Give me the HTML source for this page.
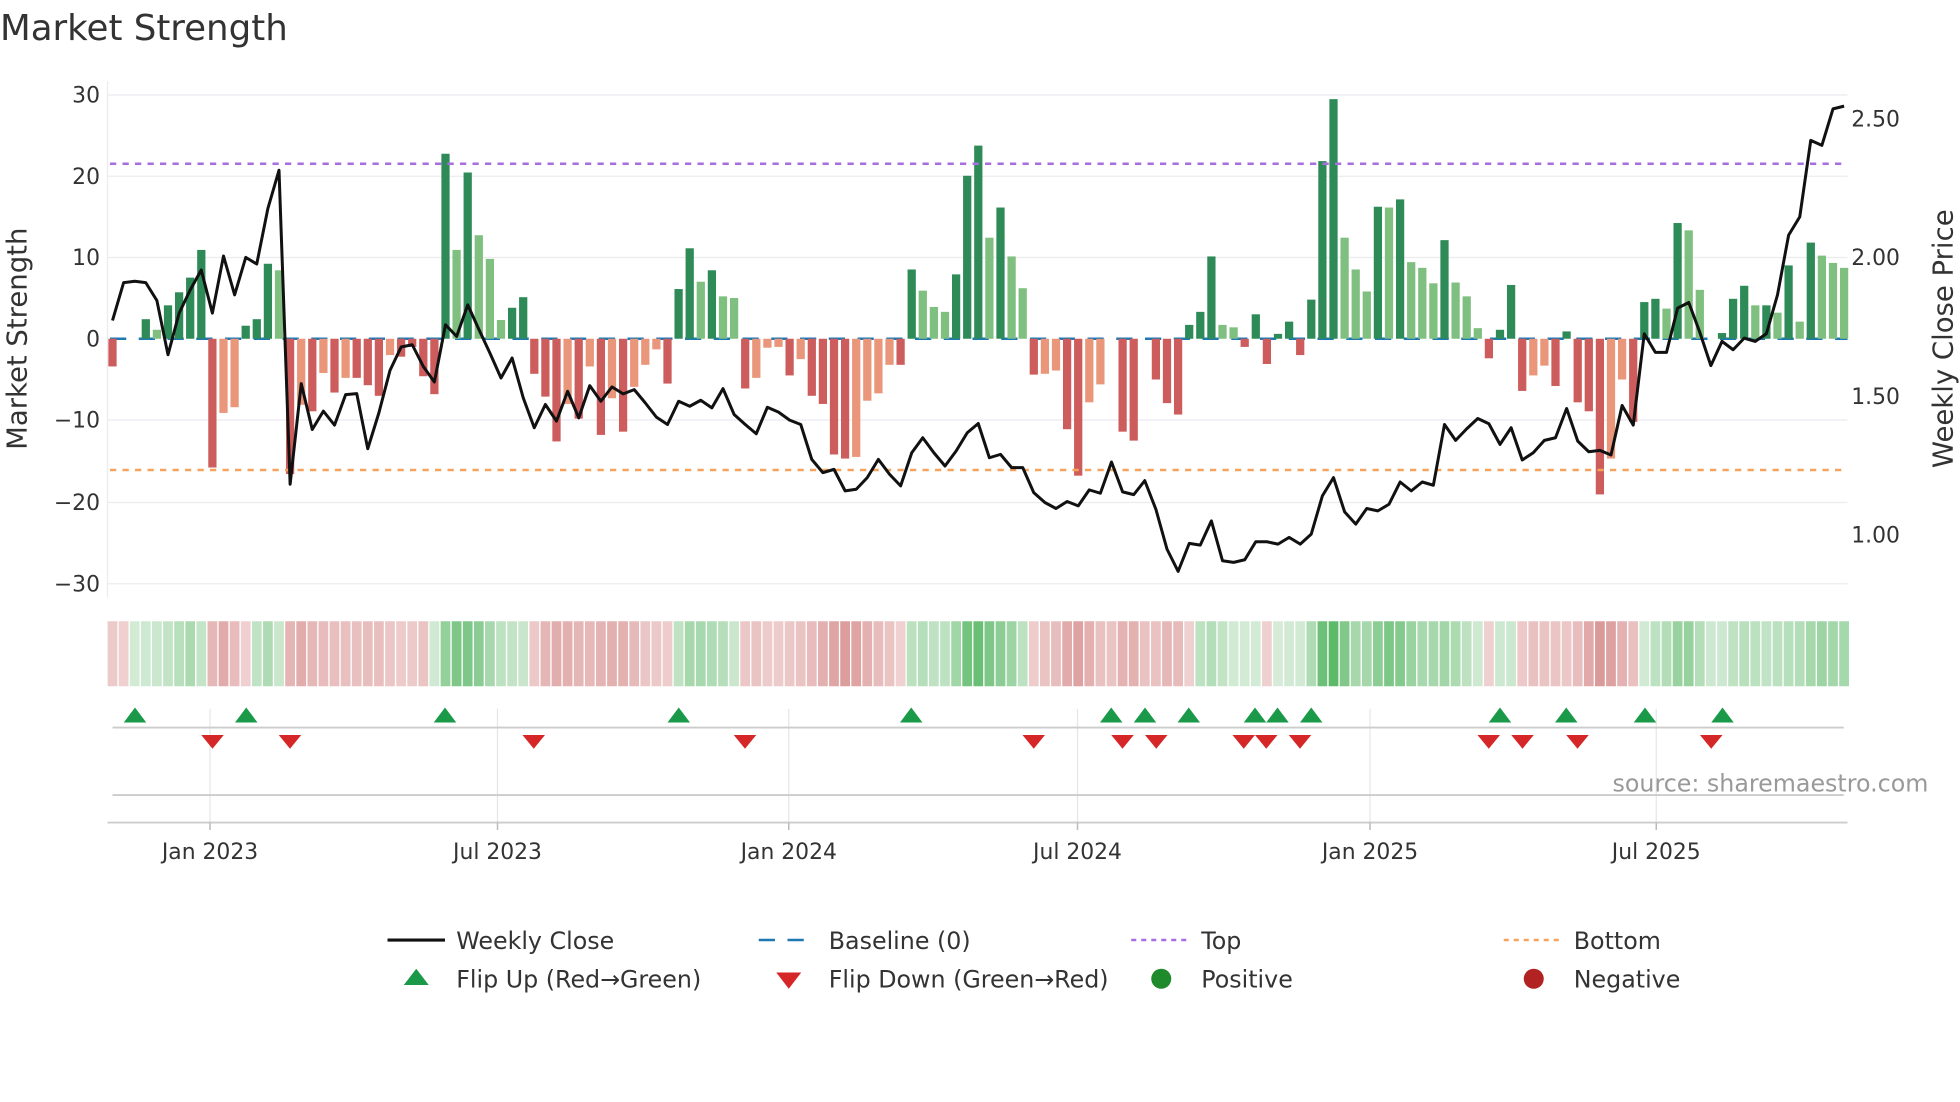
<!DOCTYPE html>
<html><head><meta charset="utf-8"><style>
html,body{margin:0;padding:0;background:#fff;width:1960px;height:1102px;overflow:hidden}
svg{display:block}
text{font-family:"DejaVu Sans","Liberation Sans",sans-serif;fill:#333}
</style></head><body>
<svg id="s" width="1960" height="1102" viewBox="0 0 1568 881.6" xmlns="http://www.w3.org/2000/svg">
<text x="0" y="32" font-size="28.5">Market Strength</text>
<g stroke="#ebebf0" stroke-width="1">
<line x1="86" x2="1478" y1="76" y2="76"/><line x1="86" x2="1478" y1="141" y2="141"/><line x1="86" x2="1478" y1="206" y2="206"/><line x1="86" x2="1478" y1="336" y2="336"/><line x1="86" x2="1478" y1="402" y2="402"/><line x1="86" x2="1478" y1="467" y2="467"/>
<line x1="86" x2="86" y1="65" y2="478"/>
</g>
<g font-size="17.5" text-anchor="end">
<text x="80" y="82">30</text><text x="80" y="147">20</text><text x="80" y="212">10</text><text x="80" y="277">0</text><text x="80" y="342">−10</text><text x="80" y="408">−20</text><text x="80" y="473">−30</text>
</g>
<g font-size="17.5">
<text x="1481" y="101">2.50</text><text x="1481" y="212">2.00</text><text x="1481" y="323">1.50</text><text x="1481" y="434">1.00</text>
</g>
<text font-size="22" transform="translate(21,271) rotate(-90)" text-anchor="middle">Market Strength</text>
<text font-size="22" transform="translate(1562,271) rotate(-90)" text-anchor="middle">Weekly Close Price</text>
<line x1="88" x2="1478" y1="271" y2="271" stroke="#1f77b4" stroke-width="2" stroke-dasharray="13,10"/>
<g id="bars"></g>
<line x1="88" x2="1478" y1="131" y2="131" stroke="#a66ee0" stroke-width="2" stroke-dasharray="5,5"/>
<line x1="88" x2="1478" y1="376" y2="376" stroke="#f4a25c" stroke-width="2" stroke-dasharray="5,5"/>
<polyline id="pl" fill="none" stroke="#111" stroke-width="2.4" stroke-linejoin="round"/>
<g id="strip"></g>
<g stroke="#e6e6ea" stroke-width="1">
<line x1="168" x2="168" y1="567" y2="658"/><line x1="398" x2="398" y1="567" y2="658"/><line x1="631" x2="631" y1="567" y2="658"/><line x1="862" x2="862" y1="567" y2="658"/><line x1="1096" x2="1096" y1="567" y2="658"/><line x1="1325" x2="1325" y1="567" y2="658"/>
</g>
<line x1="90" x2="1475" y1="582" y2="582" stroke="#ccc" stroke-width="1.5"/>
<line x1="90" x2="1475" y1="636" y2="636" stroke="#ccc" stroke-width="1.5"/>
<line x1="86" x2="1478" y1="658" y2="658" stroke="#ccc" stroke-width="1.5"/>
<g stroke="#bbb" stroke-width="1.2"><line x1="168" x2="168" y1="658" y2="664"/><line x1="398" x2="398" y1="658" y2="664"/><line x1="631" x2="631" y1="658" y2="664"/><line x1="862" x2="862" y1="658" y2="664"/><line x1="1096" x2="1096" y1="658" y2="664"/><line x1="1325" x2="1325" y1="658" y2="664"/></g>
<g id="mk"></g>
<text x="1290" y="633" font-size="19" style="fill:#999">source: sharemaestro.com</text>
<g font-size="17.5" text-anchor="middle">
<text x="168" y="687">Jan 2023</text><text x="398" y="687">Jul 2023</text><text x="631" y="687">Jan 2024</text><text x="862" y="687">Jul 2024</text><text x="1096" y="687">Jan 2025</text><text x="1325" y="687">Jul 2025</text>
</g>
<g font-size="19">
<line x1="310" x2="356" y1="752" y2="752" stroke="#111" stroke-width="2.5"/><text x="365" y="759">Weekly Close</text>
<line x1="607" x2="652" y1="752" y2="752" stroke="#1f77b4" stroke-width="2" stroke-dasharray="13,10"/><text x="663" y="759">Baseline (0)</text>
<line x1="905" x2="950" y1="752" y2="752" stroke="#a66ee0" stroke-width="2" stroke-dasharray="4,4"/><text x="961" y="759">Top</text>
<line x1="1203" x2="1248" y1="752" y2="752" stroke="#f4a25c" stroke-width="2" stroke-dasharray="4,4"/><text x="1259" y="759">Bottom</text>
<polygon points="323,788 343,788 333,775" fill="#1a9a48"/><text x="365" y="790">Flip Up (Red→Green)</text>
<polygon points="621,778 641,778 631,791" fill="#d62728"/><text x="663" y="790">Flip Down (Green→Red)</text>
<circle cx="929" cy="783" r="8" fill="#1f8a2b"/><text x="961" y="790">Positive</text>
<circle cx="1227" cy="783" r="8" fill="#b22222"/><text x="1259" y="790">Negative</text>
</g>
</svg>
<script>
var B="-3.4d 0n 0n 2.4d 1.1l 4.1d 5.7d 7.5d 10.9d -15.8d -9.1l -8.4l 1.6d 2.4d 9.2d 8.4l -16.6d -8.1l -8.9d -4.2l -6.6d -4.8l -4.8d -5.7d -7d -2l -2.2d -1d -4.6d -6.8d 22.7d 10.9l 20.4d 12.7l 9.8l 2.3l 3.8d 5.1d -4.3d -7.1d -12.6d -8l -9.8d -3.4l -11.8d -7.3l -11.4d -5.9l -3.2l -1.3l -5.5d 6.1d 11.1d 7l 8.4d 5.2l 5l -6.1d -4.8l -1.1l -1l -4.5d -2.5l -7d -8d -14.2d -14.7d -14.5l -7.6l -6.7l -3.2l -3.2d 8.5d 5.9l 3.9l 3.3l 7.9d 20d 23.7d 12.4l 16.1d 10.1l 6.2l -4.4d -4.3l -3.9l -11.1d -16.8d -7.8l -5.6l 0n -11.4d -12.5d 0n -5d -7.9d -9.3d 1.7d 3.3d 10.1d 1.7l 1.4l -1d 3d -3.1d 0.6d 2.1d -2d 4.8d 21.8d 29.4d 12.4l 8.5l 5.8l 16.2d 16.1l 17.1d 9.4l 8.7l 6.8l 12.1d 6.9l 5.2l 1.3l -2.4d 1.1d 6.6d -6.4d -4.5l -3.3l -5.8d 0.9d -7.8d -8.9d -19.1d -14.7l -5l -10.2d 4.5d 4.9d 3.7l 14.2d 13.3l 6l 0n 0.7d 4.9d 6.5d 4.1l 4.1d 3.2l 9d 2.1l 11.8d 10.2l 9.3l 8.7l".split(" ");
var L=[722,608,604,608,662,825,700,630,570,700,528,645,532,552,385,270,1215,912,1050,995,1037,945,942,1108,1000,872,802,795,860,907,735,770,675,748,820,895,835,955,1045,975,1025,935,1015,918,965,922,943,930,970,1013,1035,965,980,
962,985,927,1005,1035,1063,983,998,1022,1035,1140,1180,1170,1235,1230,1195,1140,1185,1220,1120,1075,1120,1160,1115,1060,1032,1135,1125,1165,1165,1240,1270,1288,1267,1280,1232,1242,1148,1238,1246,1204,1290,1410,1477,1393,1398,1325,1445,1450,1442,1388,1388,1395,1375,
1395,1365,1250,1195,1298,1335,1288,1295,1275,1208,1235,1208,1218,1035,1083,1048,1017,1033,1095,1045,1142,1120,1083,1075,987,1085,1117,1113,1127,978,1037,762,818,818,685,668,757,858,785,810,775,785,762,645,465,410,180,195,85,77];
var ns="http://www.w3.org/2000/svg",bars=document.getElementById("bars"),strip=document.getElementById("strip");
function el(t,a,p){var e=document.createElementNS(ns,t);for(var k in a)e.setAttribute(k,a[k]);p.appendChild(e);return e;}
var pts=[];
for(var i=0;i<B.length;i++){
 var v=parseFloat(B[i]),c=B[i].slice(-1),x=90+i*8.88;
 var col=v>=0?(c=="d"?"#2e8b57":"#7fbf7f"):(c=="d"?"#cd5c5c":"#e9967a");
 if(c!="n"){var h=Math.abs(v)*6.52;el("rect",{x:x-3.3,y:v>=0?271-h:271,width:6.6,height:h,fill:col},bars);}
 var s=0,n=0;for(var j=-1;j<=1;j++){var q=B[i+j];if(q){s+=parseFloat(q)*(j==0?2:1);n+=(j==0?2:1);}}s/=n;
 var a=Math.min(1,Math.abs(s)/22);
 var sc=s>=0?"rgb("+Math.round(214-120*a)+","+Math.round(236-50*a)+","+Math.round(216-110*a)+")":"rgb("+Math.round(240-30*a)+","+Math.round(210-80*a)+","+Math.round(210-80*a)+")";
 el("rect",{x:x-3.9,y:497,width:7.8,height:52,fill:sc},strip);
 pts.push(x.toFixed(1)+","+(271+(L[i]-777)*0.2658).toFixed(1));
}
document.getElementById("pl").setAttribute("points",pts.join(" "));
var mk=document.getElementById("mk");
[108,197,356,543,729,889,916,951,1004,1022,1049,1200,1253,1316,1378].forEach(function(x){el("polygon",{points:(x-9)+",578 "+(x+9)+",578 "+x+",566",fill:"#1a9a48"},mk);});
[170,232,427,596,827,898,925,995,1013,1040,1191,1218,1262,1369].forEach(function(x){el("polygon",{points:(x-9)+",588 "+(x+9)+",588 "+x+",599",fill:"#d62728"},mk);});
</script>
</body></html>
